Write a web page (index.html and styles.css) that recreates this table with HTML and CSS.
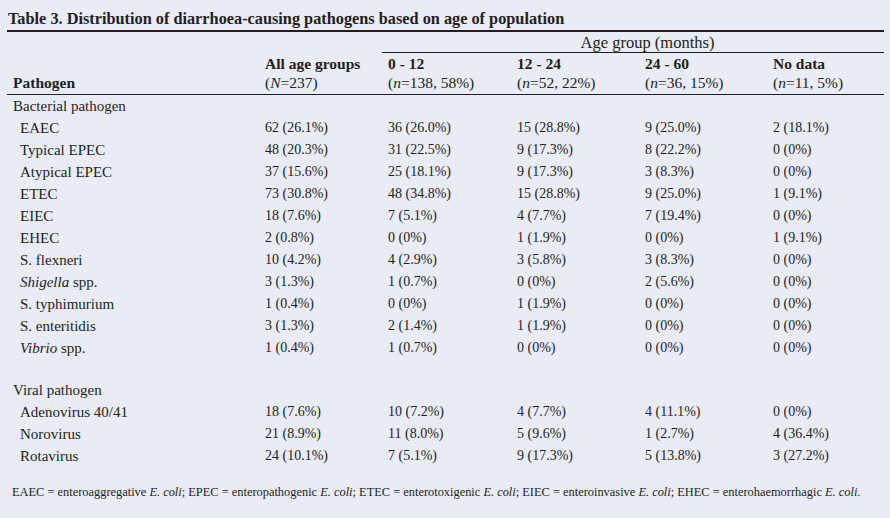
FILE: index.html
```html
<!DOCTYPE html>
<html lang="en">
<head>
<meta charset="utf-8">
<title>Table 3</title>
<link rel="stylesheet" href="styles.css">
</head>
<body>
<div class="page">
  <table class="data">
    <colgroup>
      <col class="c0"><col class="c1"><col class="c2"><col class="c3"><col class="c4"><col class="c5">
    </colgroup>
    <thead>
      <tr class="title-row">
        <th colspan="6" class="title">Table 3. Distribution of diarrhoea-causing pathogens based on age of population</th>
      </tr>
      <tr class="group-row">
        <th></th><th></th>
        <th colspan="4" class="group">Age group (months)</th>
      </tr>
      <tr class="head-row">
        <th class="label">Pathogen</th>
        <th><b>All age groups</b><span class="sub">(<i>N</i>=237)</span></th>
        <th><b>0 - 12</b><span class="sub">(<i>n</i>=138, 58%)</span></th>
        <th><b>12 - 24</b><span class="sub">(<i>n</i>=52, 22%)</span></th>
        <th><b>24 - 60</b><span class="sub">(<i>n</i>=36, 15%)</span></th>
        <th><b>No data</b><span class="sub">(<i>n</i>=11, 5%)</span></th>
      </tr>
    </thead>
    <tbody>
      <tr class="section"><td colspan="6">Bacterial pathogen</td></tr>
      <tr><td class="item">EAEC</td><td>62 (26.1%)</td><td>36 (26.0%)</td><td>15 (28.8%)</td><td>9 (25.0%)</td><td>2 (18.1%)</td></tr>
      <tr><td class="item">Typical EPEC</td><td>48 (20.3%)</td><td>31 (22.5%)</td><td>9 (17.3%)</td><td>8 (22.2%)</td><td>0 (0%)</td></tr>
      <tr><td class="item">Atypical EPEC</td><td>37 (15.6%)</td><td>25 (18.1%)</td><td>9 (17.3%)</td><td>3 (8.3%)</td><td>0 (0%)</td></tr>
      <tr><td class="item">ETEC</td><td>73 (30.8%)</td><td>48 (34.8%)</td><td>15 (28.8%)</td><td>9 (25.0%)</td><td>1 (9.1%)</td></tr>
      <tr><td class="item">EIEC</td><td>18 (7.6%)</td><td>7 (5.1%)</td><td>4 (7.7%)</td><td>7 (19.4%)</td><td>0 (0%)</td></tr>
      <tr><td class="item">EHEC</td><td>2 (0.8%)</td><td>0 (0%)</td><td>1 (1.9%)</td><td>0 (0%)</td><td>1 (9.1%)</td></tr>
      <tr><td class="item">S. flexneri</td><td>10 (4.2%)</td><td>4 (2.9%)</td><td>3 (5.8%)</td><td>3 (8.3%)</td><td>0 (0%)</td></tr>
      <tr><td class="item"><i>Shigella</i> spp.</td><td>3 (1.3%)</td><td>1 (0.7%)</td><td>0 (0%)</td><td>2 (5.6%)</td><td>0 (0%)</td></tr>
      <tr><td class="item">S. typhimurium</td><td>1 (0.4%)</td><td>0 (0%)</td><td>1 (1.9%)</td><td>0 (0%)</td><td>0 (0%)</td></tr>
      <tr><td class="item">S. enteritidis</td><td>3 (1.3%)</td><td>2 (1.4%)</td><td>1 (1.9%)</td><td>0 (0%)</td><td>0 (0%)</td></tr>
      <tr><td class="item"><i>Vibrio</i> spp.</td><td>1 (0.4%)</td><td>1 (0.7%)</td><td>0 (0%)</td><td>0 (0%)</td><td>0 (0%)</td></tr>
      <tr class="spacer"><td colspan="6"></td></tr>
      <tr class="section"><td colspan="6">Viral pathogen</td></tr>
      <tr><td class="item">Adenovirus 40/41</td><td>18 (7.6%)</td><td>10 (7.2%)</td><td>4 (7.7%)</td><td>4 (11.1%)</td><td>0 (0%)</td></tr>
      <tr><td class="item">Norovirus</td><td>21 (8.9%)</td><td>11 (8.0%)</td><td>5 (9.6%)</td><td>1 (2.7%)</td><td>4 (36.4%)</td></tr>
      <tr><td class="item">Rotavirus</td><td>24 (10.1%)</td><td>7 (5.1%)</td><td>9 (17.3%)</td><td>5 (13.8%)</td><td>3 (27.2%)</td></tr>
    </tbody>
  </table>
  <p class="note">EAEC = enteroaggregative <i>E. coli</i>; EPEC = enteropathogenic <i>E. coli</i>; ETEC = enterotoxigenic <i>E. coli</i>; EIEC = enteroinvasive <i>E. coli</i>; EHEC = enterohaemorrhagic <i>E. coli</i>.</p>
</div>
</body>
</html>
```

FILE: styles.css
```css
html, body {
  margin: 0;
  padding: 0;
  background: #e9ebf5;
}
.page {
  width: 890px;
  height: 518px;
  box-sizing: border-box;
  padding: 0 6px 0 7px;
  font-family: "Liberation Serif", "Times New Roman", serif;
  color: #231f20;
}
.data {
  width: 877px;
  border-collapse: separate;
  border-spacing: 0;
  table-layout: fixed;
  font-size: 14px;
}
.c0 { width: 252px; }
.c1 { width: 123px; }
.c2 { width: 129px; }
.c3 { width: 128px; }
.c4 { width: 128px; }
.c5 { width: 117px; }
th, td {
  box-sizing: border-box;
  padding: 0 0 0 6px;
  text-align: left;
  vertical-align: middle;
  white-space: nowrap;
}
.title-row th {
  height: 32px;
  padding: 0 0 2px 1px;
  font-size: 16.3px;
  line-height: 18px;
  font-weight: bold;
  border-bottom: 2px solid #231f20;
  vertical-align: bottom;
}
.group-row th {
  height: 21px;
  font-weight: normal;
  padding: 0;
  line-height: 18px;
}
.group-row .group {
  text-align: center;
  padding-left: 29px;
  padding-top: 1px;
  border-bottom: 1px solid #231f20;
  font-size: 16.5px;
}
.head-row th {
  height: 42px;
  font-weight: normal;
  vertical-align: bottom;
  padding-bottom: 2px;
  border-bottom: 1px solid #231f20;
  line-height: 19px;
  font-size: 15.5px;
}
.head-row b { display: block; font-weight: bold; }
.head-row .sub { display: block; }
.head-row .label { font-weight: bold; }
td {
  height: 22px;
  line-height: 20px;
  font-size: 14px;
}
.section td { padding-left: 6px; font-size: 15px; }
td.item { padding-left: 13px; font-size: 15px; }
.spacer td { height: 20px; }
.note {
  margin: 17px 0 0 5px;
  font-size: 12.4px;
  line-height: 16px;
}
```
